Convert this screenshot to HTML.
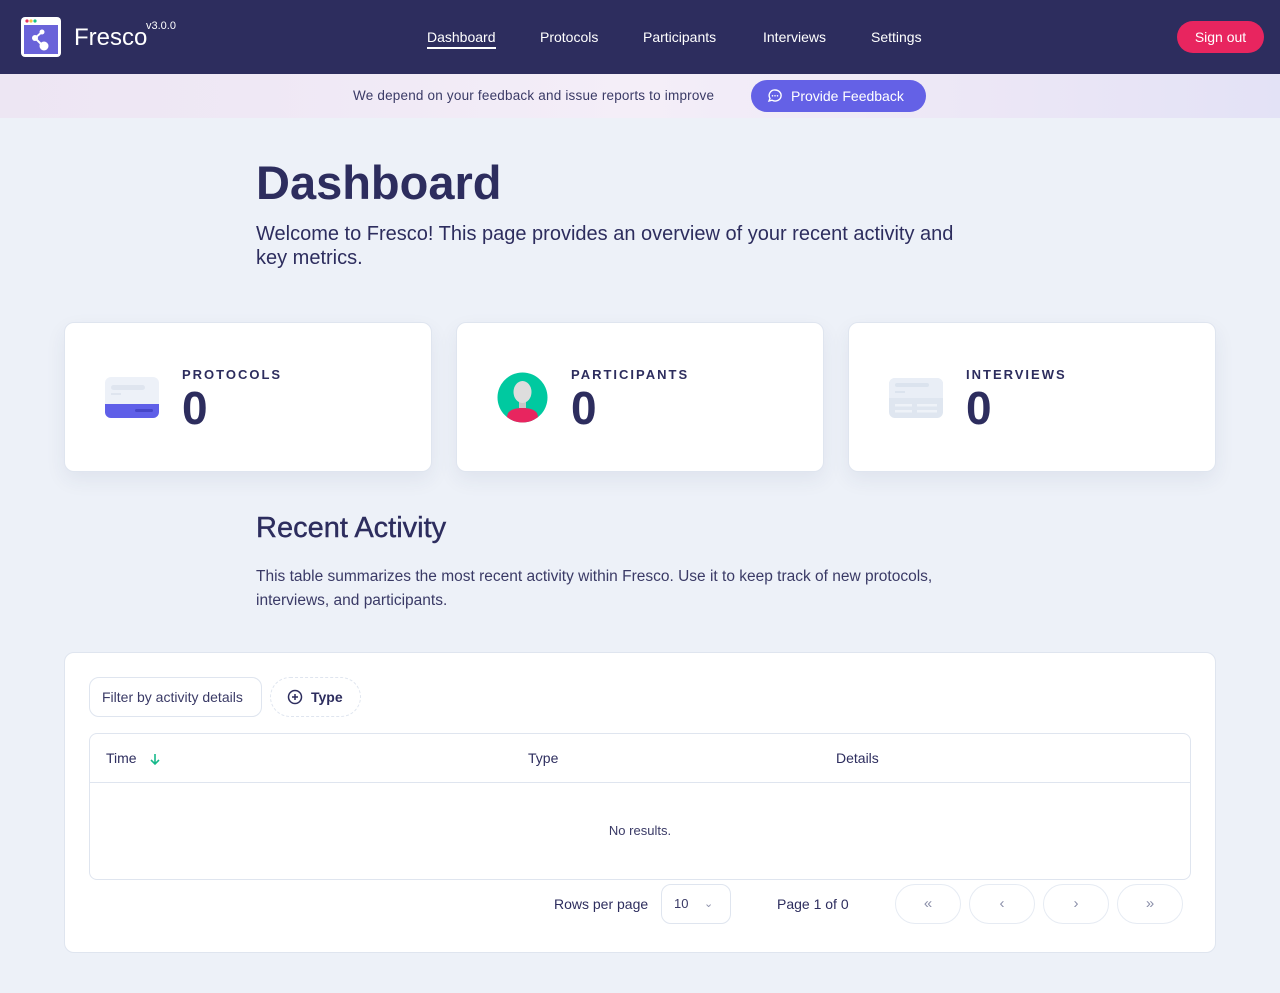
<!DOCTYPE html>
<html><head><meta charset="utf-8"><style>
*{box-sizing:border-box;margin:0;padding:0}
body{width:1280px;height:993px;background:#edf1f8;font-family:"Liberation Sans",sans-serif;color:#2d2d5e;position:relative;overflow:hidden}
.nav{position:absolute;left:0;top:0;width:1280px;height:74px;background:#2d2d5e}
.abs{position:absolute}
.navl{position:absolute;top:29px;color:#fff;font-size:14px}
.banner{position:absolute;top:74px;left:0;width:1280px;height:44px;background:linear-gradient(90deg,#ede6f3,#efe8f5 20%,#f4eef8 50%,#ebe6f6 80%,#e3e2f6)}
.card{position:absolute;top:322px;width:368px;height:150px;background:#fff;border:1px solid #dfe5ef;border-radius:10px;box-shadow:0 8px 20px rgba(40,50,100,.07)}
.lbl{position:absolute;left:117px;top:44px;font-size:13px;letter-spacing:2px;font-weight:bold}
.num{position:absolute;left:117px;top:58px;font-size:46px;font-weight:bold}
.pbtn{position:absolute;top:884px;width:66px;height:40px;border:1px solid #e6ebf3;border-radius:20px;color:#8c90aa;text-align:center;line-height:38px;font-size:15px}
</style></head><body>
<div class="nav">
 <svg class="abs" style="left:20px;top:16px" width="42" height="42" viewBox="0 0 42 42"><rect x="1" y="1" width="40" height="40" rx="4" fill="#fff"/><rect x="4" y="9" width="34" height="29" fill="#6a63d9"/><circle cx="7" cy="5" r="1.6" fill="#e8325a"/><circle cx="11" cy="5" r="1.6" fill="#f6c343"/><circle cx="15" cy="5" r="1.6" fill="#16c48a"/><path d="M22 16 L15 22 L23 30" stroke="#fff" stroke-width="2" fill="none"/><circle cx="22" cy="16" r="2.5" fill="#fff"/><circle cx="15" cy="22" r="3" fill="#fff"/><circle cx="24" cy="30" r="4.5" fill="#fff"/></svg>
 <div class="abs" style="left:74px;top:24px;color:#fff;font-size:24px">Fresco</div>
 <div class="abs" style="left:146px;top:20px;color:#fff;font-size:11px">v3.0.0</div>
 <div class="navl" style="left:427px;border-bottom:2px solid #fff;padding-bottom:2px">Dashboard</div>
 <div class="navl" style="left:540px">Protocols</div>
 <div class="navl" style="left:643px">Participants</div>
 <div class="navl" style="left:763px">Interviews</div>
 <div class="navl" style="left:871px">Settings</div>
 <div class="abs" style="left:1177px;top:21px;width:87px;height:32px;border-radius:16px;background:#e8255f;color:#fff;font-size:14px;text-align:center;line-height:32px">Sign out</div>
</div>
<div class="banner">
 <div class="abs" style="left:353px;top:14px;font-size:13.5px;color:#3a3a66;letter-spacing:0.2px">We depend on your feedback and issue reports to improve</div>
 <div class="abs" style="left:751px;top:6px;width:175px;height:32px;border-radius:16px;background:#6461e6;color:#fff;font-size:14px;line-height:32px;padding-left:40px">Provide Feedback</div>
 <svg class="abs" style="left:767px;top:14px" width="16" height="16" viewBox="0 0 16 16"><path d="M8 2a6 5.5 0 1 1-3 10.2L2 13l1-2.6A5.5 5.5 0 0 1 8 2z" fill="none" stroke="#fff" stroke-width="1.4"/><circle cx="5.5" cy="7.8" r=".8" fill="#fff"/><circle cx="8" cy="7.8" r=".8" fill="#fff"/><circle cx="10.5" cy="7.8" r=".8" fill="#fff"/></svg>
</div>
<div class="abs" style="left:256px;top:155px;font-size:47px;font-weight:bold;letter-spacing:0px">Dashboard</div>
<div class="abs" style="left:256px;top:222px;width:720px;font-size:20px;line-height:24px">Welcome to Fresco! This page provides an overview of your recent activity and key metrics.</div>
<div class="card" style="left:64px">
 <svg class="abs" style="left:40px;top:54px" width="54" height="41" viewBox="0 0 54 41"><rect width="54" height="41" rx="6" fill="#edf1f8"/><path d="M0 27h54v8a6 6 0 0 1-6 6H6a6 6 0 0 1-6-6z" fill="#5f5fe8"/><rect x="6" y="8" width="34" height="5" rx="2.5" fill="#dfe5ef"/><rect x="6" y="16" width="10" height="2" fill="#dfe5ef"/><rect x="30" y="32" width="18" height="3" rx="1.5" fill="#4646c8"/></svg>
 <div class="lbl">PROTOCOLS</div><div class="num">0</div>
</div>
<div class="card" style="left:456px">
 <svg class="abs" style="left:40px;top:49px" width="51" height="51" viewBox="0 0 51 51"><clipPath id="c"><circle cx="25.5" cy="25.5" r="25"/></clipPath><circle cx="25.5" cy="25.5" r="25" fill="#00c9a0"/><g clip-path="url(#c)"><path d="M8 51l3-10c3-4 9-5 14.5-5S37 37 40 41l3 10z" fill="#e8255f"/><rect x="22" y="28" width="7" height="8" fill="#c8c8c8"/><ellipse cx="25.5" cy="20" rx="9" ry="11" fill="#ddd"/></g></svg>
 <div class="lbl" style="left:114px">PARTICIPANTS</div><div class="num" style="left:114px">0</div>
</div>
<div class="card" style="left:848px">
 <svg class="abs" style="left:40px;top:55px" width="54" height="40" viewBox="0 0 54 40"><rect width="54" height="40" rx="6" fill="#dfe6f0"/><path d="M6 0h42a6 6 0 0 1 6 6v14H0V6a6 6 0 0 1 6-6z" fill="#e9eef6"/><rect x="6" y="5" width="34" height="4" rx="2" fill="#dbe3ee"/><rect x="6" y="13" width="10" height="2" fill="#dbe3ee"/><rect x="6" y="26" width="17" height="2.5" fill="#eef2f8"/><rect x="28" y="26" width="20" height="2.5" fill="#eef2f8"/><rect x="6" y="32" width="17" height="2.5" fill="#eef2f8"/><rect x="28" y="32" width="20" height="2.5" fill="#eef2f8"/></svg>
 <div class="lbl" style="left:117px">INTERVIEWS</div><div class="num">0</div>
</div>
<div class="abs" style="left:256px;top:512px;font-size:29px;-webkit-text-stroke:0.4px #2d2d5e">Recent Activity</div>
<div class="abs" style="left:256px;top:565px;width:730px;font-size:15.5px;line-height:24px;color:#3a3a66">This table summarizes the most recent activity within Fresco. Use it to keep track of new protocols, interviews, and participants.</div>
<div class="abs" style="left:64px;top:652px;width:1152px;height:301px;background:#fff;border:1px solid #dfe5ef;border-radius:10px">
 <div class="abs" style="left:24px;top:24px;width:173px;height:40px;border:1px solid #dfe5ef;border-radius:10px;font-size:14px;line-height:38px;padding-left:12px;color:#3a3a66;white-space:nowrap;overflow:hidden">Filter by activity details</div>
 <div class="abs" style="left:205px;top:24px;width:91px;height:40px;border:1px dashed #dfe5ef;border-radius:20px;font-size:14px;line-height:38px;padding-left:40px;font-weight:bold">Type</div>
 <svg class="abs" style="left:222px;top:36px" width="16" height="16" viewBox="0 0 16 16"><circle cx="8" cy="8" r="6.5" fill="none" stroke="#2d2d5e" stroke-width="1.5"/><path d="M8 5v6M5 8h6" stroke="#2d2d5e" stroke-width="1.5"/></svg>
 <div class="abs" style="left:24px;top:80px;width:1102px;height:147px;border:1px solid #dfe5ef;border-radius:8px">
  <div class="abs" style="left:0;top:48px;width:1100px;border-top:1px solid #dfe5ef"></div>
  <div class="abs" style="left:16px;top:16px;font-size:14px">Time</div>
  <svg class="abs" style="left:58px;top:18px" width="14" height="14" viewBox="0 0 14 14"><path d="M7 2v10M3 8l4 4 4-4" stroke="#16b98a" stroke-width="1.6" fill="none"/></svg>
  <div class="abs" style="left:438px;top:16px;font-size:14px">Type</div>
  <div class="abs" style="left:746px;top:16px;font-size:14px">Details</div>
  <div class="abs" style="left:0;top:89px;width:1100px;text-align:center;font-size:13px;color:#3a3a66">No results.</div>
 </div>
</div>
<div class="abs" style="left:554px;top:896px;font-size:14px">Rows per page</div>
<div class="abs" style="left:661px;top:884px;width:70px;height:40px;border:1px solid #dfe5ef;border-radius:10px;font-size:13px;line-height:38px;padding-left:12px;color:#3a3a66">10<span style="position:absolute;left:42px;color:#8c90aa;font-size:11px">&#8964;</span></div>
<div class="abs" style="left:777px;top:896px;font-size:14px">Page 1 of 0</div>
<div class="pbtn" style="left:895px">«</div>
<div class="pbtn" style="left:969px">‹</div>
<div class="pbtn" style="left:1043px">›</div>
<div class="pbtn" style="left:1117px">»</div>
</body></html>
